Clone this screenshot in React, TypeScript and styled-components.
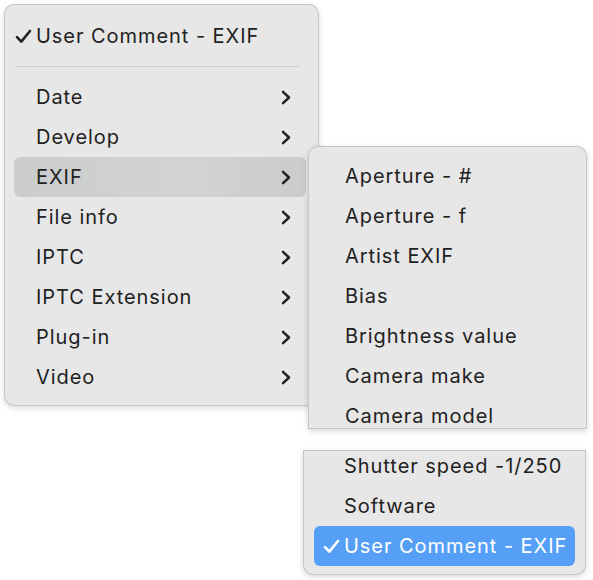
import React from "react";
import styled, { createGlobalStyle } from "styled-components";

const Global = createGlobalStyle`
  html, body { margin: 0; padding: 0; background: #ffffff; }
  body { font-family: Inter, "Noto Sans", "Liberation Sans", sans-serif; }
`;

const Page = styled.div`
  display: flex;
  align-items: flex-start;
  padding: 4px;
`;

const Menu = styled.div`
  width: 315px;
  height: 402px;
  box-sizing: border-box;
  padding: 11px 12px 10px 9px;
  background: #e7e7e7;
  border: 1px solid rgba(0, 0, 0, 0.14);
  border-radius: 10px;
  box-shadow: 0 2px 6px rgba(0, 0, 0, 0.14);
  display: flex;
  flex-direction: column;
`;

const SubColumn = styled.div`
  display: flex;
  flex-direction: column;
  margin-left: -11px;
  margin-top: 142px;
  position: relative;
`;

const Panel = styled.div<{ $shift: number; $w: number; $h: number; $radius: string }>`
  width: ${(p) => p.$w}px;
  height: ${(p) => p.$h}px;
  margin-left: ${(p) => p.$shift}px;
  box-sizing: border-box;
  background: #e7e7e7;
  border: 1px solid rgba(0, 0, 0, 0.14);
  border-radius: ${(p) => p.$radius};
  box-shadow: 0 2px 6px rgba(0, 0, 0, 0.16);
  overflow: hidden;
  display: flex;
  flex-direction: column;
`;

const UpperPanel = styled(Panel)`
  padding: 9px 10px 0 10px;
`;

const LowerPanel = styled(Panel)`
  margin-top: 21px;
  padding: 0 10px 8px 10px;
  justify-content: flex-end;
`;

const Row = styled.div<{ $kind?: "hover" | "selected"; $lead?: number }>`
  flex: none;
  height: 40px;
  display: grid;
  grid-template-columns: ${(p) => p.$lead ?? 22}px 1fr auto;
  align-items: center;
  padding-right: 15px;
  border-radius: 6px;
  font-size: 20px;
  letter-spacing: 0.95px;
  color: ${(p) => (p.$kind === "selected" ? "#ffffff" : "#222222")};
  background: ${(p) =>
    p.$kind === "hover"
      ? "linear-gradient(90deg, #cbcccc, #d2d3d3 60%, #cacbcb)"
      : p.$kind === "selected"
      ? "#569ff6"
      : "transparent"};
`;

const Lead = styled.span`
  display: flex;
  align-items: center;
  justify-content: flex-end;
  padding-right: 4px;
`;

const Label = styled.span`
  white-space: nowrap;
`;

const Separator = styled.div`
  flex: none;
  height: 21px;
  display: flex;
  align-items: center;
  padding-left: 1px;
  &::after {
    content: "";
    display: block;
    width: 284px;
    height: 1px;
    background: #cfcfcf;
  }
`;

const Check = ({ color = "#222" }: { color?: string }) => (
  <svg width="17" height="15" viewBox="0 0 17 15">
    <path d="M2 8.2 L6.3 12.6 L15 2" fill="none" stroke={color} strokeWidth="2.6" strokeLinecap="round" strokeLinejoin="round" />
  </svg>
);

const Chevron = () => (
  <svg width="10" height="15" viewBox="0 0 10 15">
    <path d="M2 1.8 L8 7.5 L2 13.2" fill="none" stroke="#222" strokeWidth="2.5" strokeLinecap="round" strokeLinejoin="round" />
  </svg>
);

const mainItems = ["Date", "Develop", "EXIF", "File info", "IPTC", "IPTC Extension", "Plug-in", "Video"];
const upperItems = [
  "Aperture - #",
  "Aperture - f",
  "Artist EXIF",
  "Bias",
  "Brightness value",
  "Camera make",
  "Camera model",
];

export default function App() {
  return (
    <>
      <Global />
      <Page>
        <Menu>
          <Row>
            <Lead>
              <Check />
            </Lead>
            <Label>User Comment - EXIF</Label>
            <span />
          </Row>
          <Separator />
          {mainItems.map((m) => (
            <Row key={m} $kind={m === "EXIF" ? "hover" : undefined}>
              <span />
              <Label>{m}</Label>
              <Chevron />
            </Row>
          ))}
        </Menu>
        <SubColumn>
          <UpperPanel $shift={0} $w={279} $h={283} $radius="10px 10px 0 0">
            {upperItems.map((m) => (
              <Row key={m} $lead={26}>
                <span />
                <Label>{m}</Label>
              </Row>
            ))}
          </UpperPanel>
          <LowerPanel $shift={-5} $w={283} $h={125} $radius="0 0 10px 10px">
            <Row $lead={30}>
              <span />
              <Label>Shutter speed -1/250</Label>
            </Row>
            <Row $lead={30}>
              <span />
              <Label>Software</Label>
            </Row>
            <Row $kind="selected" $lead={30}>
              <Lead>
                <Check color="#ffffff" />
              </Lead>
              <Label>User Comment - EXIF</Label>
              <span />
            </Row>
          </LowerPanel>
        </SubColumn>
      </Page>
    </>
  );
}
